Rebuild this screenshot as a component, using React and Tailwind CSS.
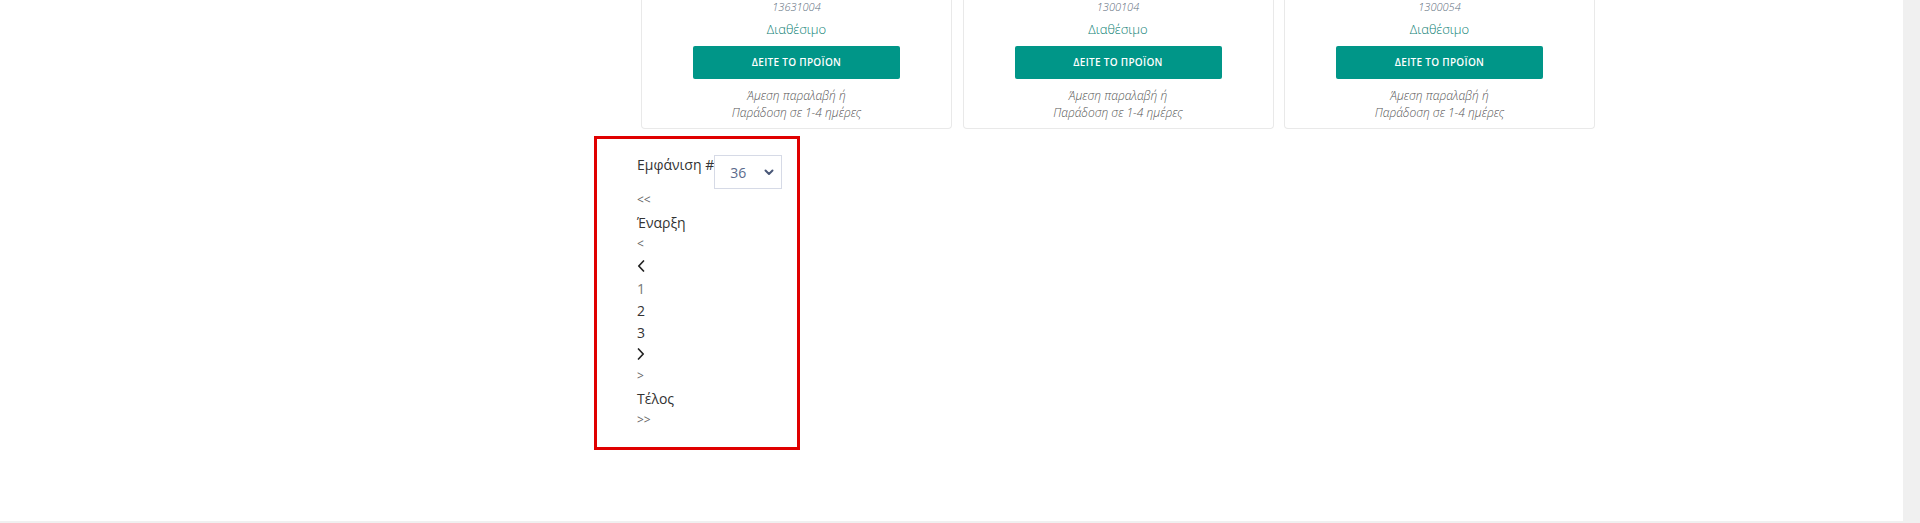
import React from 'react';

const products = [
    { code: '13631004' },
    { code: '1300104' },
    { code: '1300054' },
];

const ChevronLeft = () => (
    <svg width="8" height="12" viewBox="0 0 8 12" fill="none">
        <polyline points="6.5,1 1.8,6 6.5,11" stroke="#222" strokeWidth="1.7" strokeLinecap="round" strokeLinejoin="round" />
    </svg>
);

const ChevronRight = () => (
    <svg width="8" height="12" viewBox="0 0 8 12" fill="none">
        <polyline points="1.5,1 6.2,6 1.5,11" stroke="#222" strokeWidth="1.7" strokeLinecap="round" strokeLinejoin="round" />
    </svg>
);

const ProductCard = ({ code }) => (
    <div className="w-[311px] border border-t-0 border-[#e9e9e9] rounded-b-[4px] flex flex-col items-center pb-[7px]">
        <div className="text-[11px] leading-[14px] italic font-light text-[#5f7080]">{code}</div>
        <div className="mt-[5px] text-[13px] leading-[20px] font-light text-[#0e7f75]">Διαθέσιμο</div>
        <button className="mt-[7px] w-[207px] h-[33px] bg-[#009688] rounded-[2px] text-white text-[10px] font-semibold tracking-[0.03em]">
            ΔΕΙΤΕ ΤΟ ΠΡΟΪΟΝ
        </button>
        <div className="mt-[8px] text-[12px] leading-[17px] italic font-light text-[#555] text-center">
            Άμεση παραλαβή ή
            <br />
            Παράδοση σε 1-4 ημέρες
        </div>
    </div>
);

const PageLine = ({ children, small, light }) => (
    <div
        className={`h-[22px] flex items-center ${
            small ? 'text-[12px] text-[#666]' : light ? 'text-[14px] text-[#777]' : 'text-[14px] text-[#333]'
        }`}
    >
        {children}
    </div>
);

export default function App() {
    return (
        <div className="w-[1920px] h-[523px] flex bg-white font-['Open_Sans',sans-serif] overflow-hidden">
            <div className="flex-1 flex flex-col">
                <div className="flex-1 pl-[594px]">
                    {/* product row, cut off at the top */}
                    <div className="pl-[47px] flex gap-[10.5px]">
                        {products.map((p) => (
                            <ProductCard key={p.code} code={p.code} />
                        ))}
                    </div>

                    {/* page size + pagination */}
                    <div className="mt-[7px] w-[206px] h-[314px] border-[3px] border-[#e00000] pl-[40px] pt-[16px]">
                        <div className="flex items-start">
                            <span className="text-[14px] leading-[20px] text-[#333]">Εμφάνιση #</span>
                            <div className="w-[68px] h-[34px] border border-[#d6dae6] flex items-center justify-between pl-[15px] pr-[7px]">
                                <span className="text-[14px] text-[#5a6a8c]">36</span>
                                <svg width="10" height="7" viewBox="0 0 10 7" fill="none">
                                    <polyline points="1.5,1.5 5,5 8.5,1.5" stroke="#4a5878" strokeWidth="2" strokeLinecap="round" strokeLinejoin="round" />
                                </svg>
                            </div>
                        </div>
                        <div className="flex flex-col">
                            <PageLine small>&lt;&lt;</PageLine>
                            <PageLine>Έναρξη</PageLine>
                            <PageLine small>&lt;</PageLine>
                            <PageLine>
                                <ChevronLeft />
                            </PageLine>
                            <PageLine light>1</PageLine>
                            <PageLine>2</PageLine>
                            <PageLine>3</PageLine>
                            <PageLine>
                                <ChevronRight />
                            </PageLine>
                            <PageLine small>&gt;</PageLine>
                            <PageLine>Τέλος</PageLine>
                            <PageLine small>&gt;&gt;</PageLine>
                        </div>
                    </div>
                </div>
                <div className="h-[2px] bg-[#f0f0f0]" />
            </div>
            <div className="w-[17px] bg-[#f0f0f0]" />
        </div>
    );
}
